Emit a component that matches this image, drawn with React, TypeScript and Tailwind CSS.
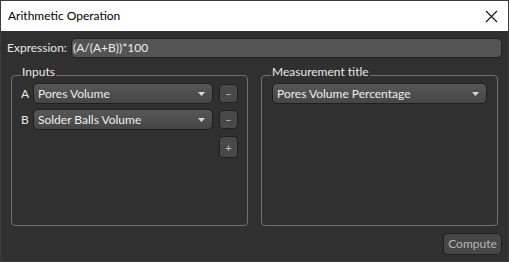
import React from "react";

function Arrow() {
  return (
    <svg width="7" height="4" viewBox="0 0 7 4" className="shrink-0">
      <path d="M0 0 L7 0 L3.5 4 Z" fill="#d8d8d8" />
    </svg>
  );
}

function Combo({ text, className }: { text: string; className?: string }) {
  return (
    <div
      className={
        "h-[21px] flex items-center justify-between pl-[4px] pr-[7px] rounded-[5px] border border-[#1f1f1f] bg-gradient-to-b from-[#575757] to-[#454545] text-[#ededed] " +
        (className ?? "")
      }
    >
      <span className="leading-none">{text}</span>
      <Arrow />
    </div>
  );
}

function SmallBtn({ label, tall }: { label: string; tall?: boolean }) {
  return (
    <div
      className={
        "w-[19px] flex items-center justify-center rounded-[4px] border border-[#1f1f1f] bg-[#494949] text-[#c0c0c0] text-[11px] leading-none " +
        (tall ? "h-[22px]" : "h-[19px]")
      }
    >
      {label}
    </div>
  );
}

export default function App() {
  return (
    <div
      className="w-[509px] h-[262px] border border-[#3c3c3c] bg-[#303030] flex flex-col text-[12px]"
      style={{ fontFamily: 'Lato, "Noto Sans", sans-serif' }}
    >
      <div className="h-[30px] bg-white flex items-center justify-between pl-[7px] pr-[10px] shrink-0">
        <span className="text-[#000] text-[12px]">Arithmetic Operation</span>
        <svg width="13" height="13" viewBox="0 0 13 13">
          <path d="M1 1 L12 12 M12 1 L1 12" stroke="#111" strokeWidth="1.1" />
        </svg>
      </div>
      <div className="flex-1 flex flex-col">
        <div className="flex items-center px-[6px] pt-[7px] gap-[6px]">
          <span className="text-[#e8e8e8] w-[58px] whitespace-nowrap">Expression:</span>
          <div className="flex-1 h-[20px] rounded-[5px] border border-[#222] bg-[#545454] text-[#ededed] flex items-center pl-[1px]">
            (A/(A+B))*100
          </div>
        </div>
        <div className="flex px-[10px] mt-[10px] gap-[13px]">
          <fieldset className="w-[237px] h-[158px] border border-[#707070] rounded-[4px] pl-[9px] pr-[9px]">
            <legend className="ml-[0px] px-[1px] text-[#e8e8e8] leading-[14px]">
              <span className="relative top-[-3px]">Inputs</span>
            </legend>
            <div className="flex flex-col gap-[5px] mt-[1px]">
              <div className="flex items-center">
                <span className="w-[12px] text-[#e8e8e8]">A</span>
                <Combo text="Pores Volume" className="w-[180px]" />
                <div className="ml-[6px]">
                  <SmallBtn label="–" />
                </div>
              </div>
              <div className="flex items-center">
                <span className="w-[12px] text-[#e8e8e8]">B</span>
                <Combo text="Solder Balls Volume" className="w-[180px]" />
                <div className="ml-[6px]">
                  <SmallBtn label="–" />
                </div>
              </div>
              <div className="flex justify-end mt-[1px]">
                <SmallBtn label="+" tall />
              </div>
            </div>
          </fieldset>
          <fieldset className="w-[237px] h-[158px] border border-[#707070] rounded-[4px] px-[10px]">
            <legend className="ml-[-1px] px-[1px] text-[#e8e8e8] leading-[14px]">
              <span className="relative top-[-3px]">Measurement title</span>
            </legend>
            <div className="mt-[1px]">
              <Combo text="Pores Volume Percentage" />
            </div>
          </fieldset>
        </div>
        <div className="flex justify-end px-[6px] mt-[7px]">
          <div className="w-[59px] h-[22px] rounded-[5px] border border-[#1f1f1f] bg-[#474747] text-[#b4b4b4] flex items-center justify-center">
            Compute
          </div>
        </div>
      </div>
    </div>
  );
}
